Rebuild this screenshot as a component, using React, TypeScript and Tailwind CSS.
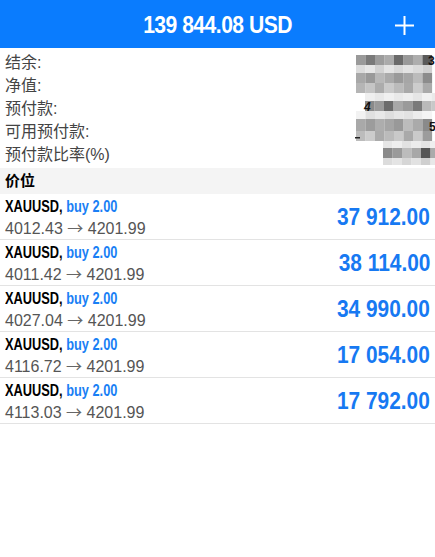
const font = { fontFamily: '"Liberation Sans", "Noto Sans CJK SC", sans-serif' };

const labels = ["结余:", "净值:", "预付款:", "可用预付款:", "预付款比率(%)"];

const positions = [
  { open: "4012.43", pnl: "37 912.00" },
  { open: "4011.42", pnl: "38 114.00" },
  { open: "4027.04", pnl: "34 990.00" },
  { open: "4116.72", pnl: "17 054.00" },
  { open: "4113.03", pnl: "17 792.00" },
];

// pixelated (blurred) values on the right of the summary
const mosaic: { y: number; h: number; x0: number; c: string[] }[] = [
  { y: 4, h: 10, x0: 4, c: ["#9a9a9a", "#7a7a7a", "#9c9c9c", "#ababab", "#6a6a6a", "#999", "#adadad", "#5a5a5a"] },
  { y: 14, h: 8, x0: 4, c: ["#dcdcdc", "#e6e6e6", "#d2d2d2", "#e4e4e4", "#d8d8d8", "#e2e2e2", "#dadada", "#d0d0d0"] },
  { y: 22, h: 10, x0: 4, c: ["#a8a8a8", "#999", "#b8b8b8", "#aaa", "#9a9a9a", "#a6a6a6", "#bbb", "#8c8c8c"] },
  { y: 32, h: 10, x0: 4, c: ["#b5b5b5", "#c5c5c5", "#acacac", "#cacaca", "#bbb", "#a9a9a9", "#cccccc", "#aaa"] },
  { y: 42, h: 8, x0: 13, c: ["#efefef", "#e8e8e8", "#f0f0f0", "#e9e9e9", "#eeeeee", "#e6e6e6", "#f1f1f1", "#eaeaea"] },
  { y: 50, h: 10, x0: 13, c: ["#8a8a8a", "#9a9a9a", "#6c6c6c", "#a8a8a8", "#9a9a9a", "#7a7a7a", "#bababa", "#c8c8c8"] },
  { y: 60, h: 8, x0: 4, c: ["#f2f2f2", "#e0e0e0", "#e8e8e8", "#dedede", "#e6e6e6", "#e2e2e2", "#ececec", "#f4f4f4"] },
  { y: 68, h: 12, x0: 4, c: ["#a9a9a9", "#9c9c9c", "#adadad", "#a5a5a5", "#999", "#bcbcbc", "#aaa", "#8a8a8a"] },
  { y: 80, h: 10, x0: 4, c: ["#bcbcbc", "#cccccc", "#ababab", "#bbbbbb", "#c9c9c9", "#a9a9a9", "#cacaca", "#9c9c9c"] },
  { y: 90, h: 7, x0: 31, c: ["#e6e6e6", "#eeeeee", "#e2e2e2", "#ececec", "#e4e4e4", "#efefef"] },
  { y: 97, h: 10, x0: 31, c: ["#8a8a8a", "#9a9a9a", "#bcbcbc", "#a8a8a8", "#555555", "#ababab"] },
  { y: 107, h: 7, x0: 31, c: ["#dcdcdc", "#e4e4e4", "#d6d6d6", "#e2e2e2", "#cfcfcf", "#e8e8e8"] },
];

function Mosaic() {
  return (
    <svg width="83" height="114" viewBox="0 0 83 114">
      {mosaic.map((r, i) =>
        r.c.map((c, j) => <rect key={`${i}-${j}`} x={r.x0 + j * 9.5} y={r.y} width="9.6" height={r.h} fill={c} />)
      )}
      <text x="76" y="14" fontSize="12" fontWeight="bold" fill="#111" fontFamily="Liberation Sans">3</text>
      <text x="12" y="60" fontSize="12" fontWeight="bold" fill="#111" fontFamily="Liberation Sans" fontStyle="italic">4</text>
      <text x="77" y="80" fontSize="12" fontWeight="bold" fill="#111" fontFamily="Liberation Sans">5</text>
      <rect x="3" y="86" width="5" height="1.5" fill="#222" />
    </svg>
  );
}

export default function App() {
  return (
    <div className="w-[435px] h-[557px] bg-white overflow-hidden" style={font}>
      <div className="h-12 bg-[#0a7cfe] flex items-center justify-center relative">
        <span className="text-white text-[24px] font-bold scale-x-[0.88] tracking-tight pt-[2px]">139 844.08 USD</span>
        <svg className="absolute right-[21px] top-[16px]" width="19" height="19" viewBox="0 0 19 19">
          <path d="M9.5 0v19M0 9.5h19" stroke="white" strokeWidth="2" />
        </svg>
      </div>

      <div className="flex justify-between pt-[3px] pb-[2px] pr-0">
        <div className="pl-[5px] text-[16px] leading-[23px] text-[#444]">
          {labels.map((l) => (
            <div key={l}>{l}</div>
          ))}
        </div>
        <Mosaic />
      </div>

      <div className="h-[26px] bg-[#f4f4f4] flex items-center pl-[5px] text-[15px] font-semibold text-black">价位</div>

      <div>
        {positions.map((p, i) => (
          <div key={i} className="h-[46px] border-b border-[#e3e3e3] flex items-center justify-between pl-[5px] pr-[5px]">
            <div className="flex flex-col pt-[1px]">
              <div className="h-5 leading-5 text-[16px] font-bold origin-left scale-x-[0.8] whitespace-nowrap">
                <span className="text-black">XAUUSD, </span>
                <span className="text-[#1a7ff5]">buy 2.00</span>
              </div>
              <div className="h-5 leading-5 text-[16px] text-[#555] whitespace-nowrap">
                {p.open} <span className="font-['Noto_Sans_CJK_SC'] text-[#666]">→</span> 4201.99
              </div>
            </div>
            <div className="text-[24px] font-bold text-[#1779f2] origin-right scale-x-[0.87] whitespace-nowrap">{p.pnl}</div>
          </div>
        ))}
      </div>
    </div>
  );
}
